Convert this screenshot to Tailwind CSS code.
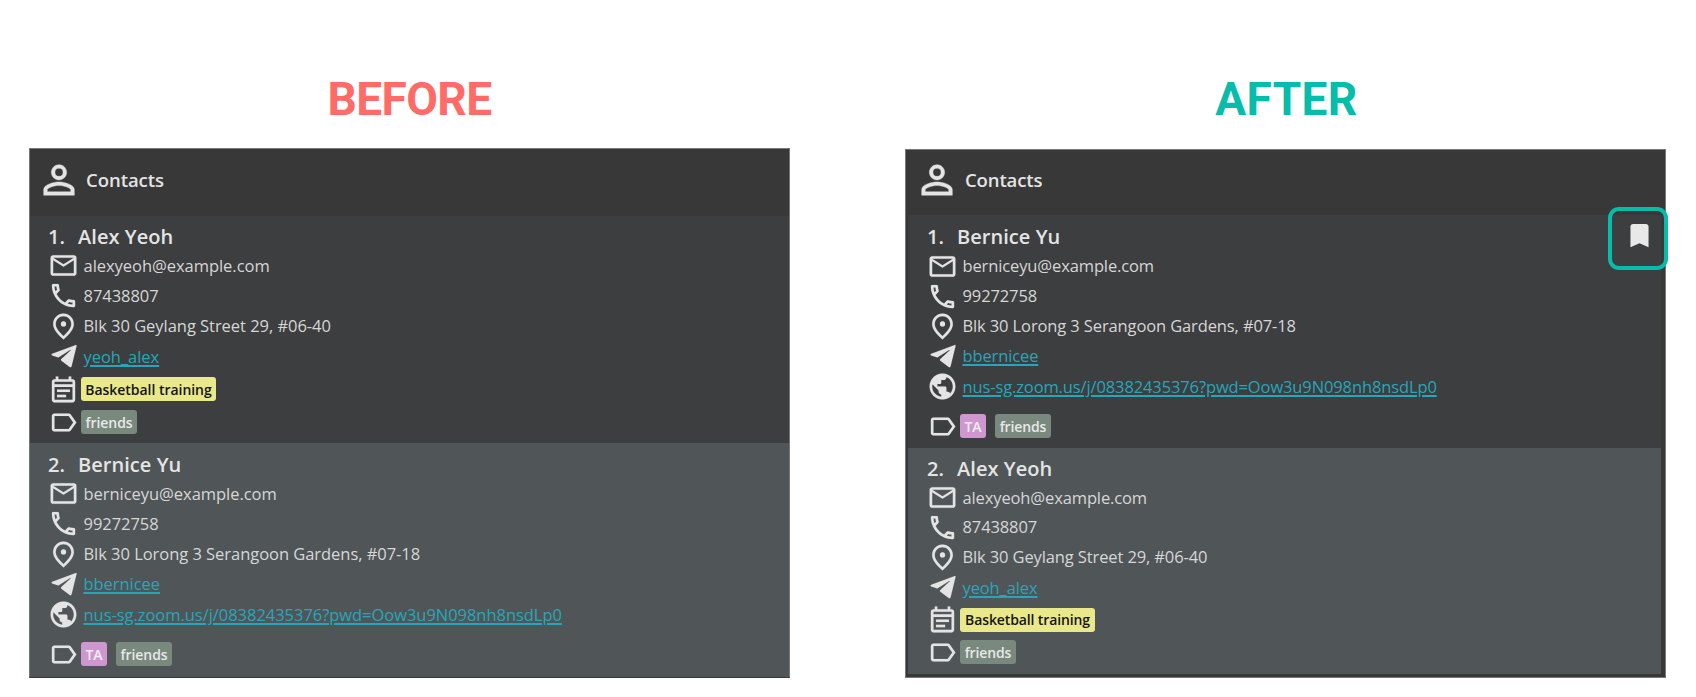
<!DOCTYPE html>
<html lang="en">
<head>
<meta charset="utf-8">
<title>Contacts</title>
<script src="https://cdn.jsdelivr.net/npm/@tailwindcss/browser@4"></script>
</head>
<body class="bg-white">
<svg class="hidden">
  <symbol id="person" viewBox="0 0 24 24"><path d="M12 5.900a2.100 2.100 0 1 1 0 4.200 2.100 2.100 0 0 1 0-4.200m0 9c2.970 0 6.100 1.460 6.100 2.100v1.100H5.900V17c0-.64 3.130-2.100 6.100-2.100M12 4C9.790 4 8 5.790 8 8s1.790 4 4 4 4-1.790 4-4-1.790-4-4-4zm0 9c-2.670 0-8 1.340-8 4v3h16v-3c0-2.660-5.330-4-8-4z"/></symbol>
  <symbol id="mail" viewBox="0 0 24 24"><path d="M22 6c0-1.100-.9-2-2-2H4c-1.100 0-2 .9-2 2v12c0 1.100.9 2 2 2h16c1.100 0 2-.9 2-2V6zm-2 0l-8 5-8-5h16zm0 12H4V8l8 5 8-5v10z"/></symbol>
  <symbol id="phone" viewBox="0 0 24 24"><path d="M6.540 5c.06.89.21 1.760.45 2.590l-1.200 1.200c-.41-1.200-.67-2.470-.76-3.790h1.510m9.860 12.020c.85.24 1.720.39 2.600.45v1.490c-1.320-.09-2.590-.35-3.800-.75l1.200-1.190M7.500 3H4c-.55 0-1 .45-1 1 0 9.390 7.610 17 17 17 .55 0 1-.45 1-1v-3.490c0-.55-.45-1-1-1-1.240 0-2.450-.2-3.570-.57-.1-.04-.21-.05-.31-.05-.26 0-.51.1-.71.29l-2.200 2.200c-2.830-1.450-5.150-3.760-6.590-6.590l2.200-2.200c.28-.28.36-.67.25-1.020C8.700 6.450 8.500 5.250 8.500 4c0-.55-.45-1-1-1z"/></symbol>
  <symbol id="pin" viewBox="0 0 24 24"><path d="M12 4c3.350 0 6 2.570 6 6.200 0 2.340-1.950 5.440-6 9.140-4.050-3.700-6-6.790-6-9.140C6 6.570 8.650 4 12 4m0-2c-4.200 0-8 3.220-8 8.200 0 3.320 2.670 7.250 8 11.800 5.330-4.550 8-8.480 8-11.800C20 5.220 16.200 2 12 2z"/><circle cx="12" cy="10" r="2"/></symbol>
  <symbol id="plane" viewBox="0 0 24 24"><path d="M21.600 3.100 3.300 9.900c-.8.400-.8 1 0 1.300l4.700 1.500 9.100-5.700c.4-.2.700.1.400.4l-7.400 6.800v.8l6.700 5.100c.8.500 1.300.2 1.500-.7L22.100 3.800c.1-.6-.1-.9-.5-.7z"/></symbol>
  <symbol id="event" viewBox="0 0 24 24"><path d="M19 4h-1V2h-2v2H8V2H6v2H5c-1.110 0-1.990.9-1.990 2L3 20c0 1.100.89 2 2 2h14c1.100 0 2-.9 2-2V6c0-1.100-.9-2-2-2zm0 16H5V10h14v10zm0-12H5V6h14v2zM7 12h10v2H7zm0 4h7v2H7z"/></symbol>
  <symbol id="label" viewBox="0 0 24 24"><path d="M17.630 5.840C17.270 5.330 16.670 5 16 5L5 5.010C3.900 5.010 3 5.900 3 7v10c0 1.100.9 1.990 2 1.990L16 19c.67 0 1.270-.33 1.630-.84L22 12l-4.370-6.160zM16 17H5V7h11l3.550 5L16 17z"/></symbol>
  <symbol id="globe" viewBox="0 0 24 24"><path d="M12 2C6.480 2 2 6.480 2 12s4.480 10 10 10 10-4.480 10-10S17.520 2 12 2zm-1 17.930c-3.950-.49-7-3.850-7-7.930 0-.62.08-1.210.21-1.790L9 15v1c0 1.100.9 2 2 2v1.930zm6.900-2.540c-.26-.81-1-1.390-1.900-1.390h-1v-3c0-.55-.45-1-1-1H8v-2h2c.55 0 1-.45 1-1V7h2c1.100 0 2-.9 2-2v-.41c2.930 1.190 5 4.060 5 7.410 0 2.080-.8 3.970-2.100 5.390z"/></symbol>
  <symbol id="bookmark" viewBox="0 0 24 24"><path d="M17 3H7c-1.100 0-2 .9-2 2v16l7-3 7 3V5c0-1.100-.9-2-2-2z"/></symbol>
</svg>

<main class="flex h-[697px] w-[1696px] gap-[115px] overflow-hidden pl-[29px] font-['Open_Sans','Noto_Sans',sans-serif] whitespace-nowrap">
  <section class="w-[761px] shrink-0 tracking-[-0.04px]">
    <h1 class="flex h-[148px] items-end justify-center pb-[19px] font-[Roboto,sans-serif] text-[46px] leading-[60px] font-bold tracking-[-0.6px] text-[#ff6b66]">BEFORE</h1>
    <div class="h-[530px] w-[761px] border border-[#777] border-b-[#383838] bg-[#3d3e3f]">
      <header class="flex h-[67px] items-center bg-[#383838] pb-[4px] pl-[6px]">
        <svg class="mb-[1px] size-[46px] shrink-0 fill-[#e4e4e4] stroke-[#e4e4e4] stroke-[0.2px]"><use href="#person"/></svg>
        <span class="mb-[2px] ml-[4px] text-[18.500px] font-semibold text-[#e4e4e4]">Contacts</span>
      </header>
      <div id="l1" class="h-[227px] pt-[6px] pl-[18px]"></div>
      <div id="l2" class="h-[234px] bg-[#505658] pt-[7px] pl-[18px]"></div>
    </div>
  </section>
  <section class="w-[761px] shrink-0 tracking-[-0.12px]">
    <h1 class="flex h-[149px] items-end justify-center pb-[20px] pl-[2px] font-[Roboto,sans-serif] text-[46px] leading-[60px] font-bold tracking-[0.4px] text-[#06bcab]">AFTER</h1>
    <div class="relative h-[529px] w-[761px] border border-[#777] bg-[#383838]">
      <header class="flex h-[65px] items-center pb-[5px] pl-[8px]">
        <svg class="mb-[1px] size-[46px] shrink-0 fill-[#e4e4e4] stroke-[#e4e4e4] stroke-[0.2px]"><use href="#person"/></svg>
        <span class="mb-[1px] ml-[5px] text-[18.500px] font-semibold text-[#e4e4e4]">Contacts</span>
      </header>
      <div id="r1" class="ml-[2px] h-[233px] w-[753px] bg-[#3d3e3f] pt-[7px] pl-[19px]"></div>
      <div id="r2" class="ml-[2px] h-[226px] w-[753px] bg-[#505658] pt-[6px] pl-[19px]"></div>
      <div class="absolute top-[57px] left-[702px] flex h-[63px] w-[60px] items-center justify-center rounded-[11px] border-4 border-[#06bcab]">
        <svg class="mb-[6px] ml-[2px] size-[31px] fill-[#e8e8e8]"><use href="#bookmark"/></svg>
      </div>
    </div>
  </section>
</main>

<script>
const alex = { name: 'Alex Yeoh', mail: 'alexyeoh@example.com', phone: '87438807', addr: 'Blk 30 Geylang Street 29, #06-40', tg: 'yeoh_alex' };
const bernice = { name: 'Bernice Yu', mail: 'berniceyu@example.com', phone: '99272758', addr: 'Blk 30 Lorong 3 Serangoon Gardens, #07-18', tg: 'bbernicee' };
const row = (h, icon, body) => `<div class="flex items-center" style="height:${h}px"><svg class="size-[31px] shrink-0 fill-[#e4e4e4] stroke-[#e4e4e4] stroke-[0.1px]"><use href="#${icon}"/></svg>${body}</div>`;
const text = t => `<span class="ml-[4.500px] pt-[1px] text-[16.500px] text-[#d6d6d6]">${t}</span>`;
const link = t => `<a class="ml-[4.500px] pt-[1px] text-[16.500px] text-[#26a6bb] underline decoration-[1.500px] underline-offset-[2px]">${t}</a>`;
const chip = { yellow: 'bg-[#e9e88a] text-[#151515] w-[135px]', green: 'bg-[#79897e] text-[#e8e8e8] w-[56px]', pink: 'bg-[#ce97cf] text-[#eee] w-[26px] mr-[7px]' };
const tag = (t, c) => `<span class="ml-[2px] flex h-[24px] items-center justify-center rounded-[3px] text-[14px] font-semibold ${chip[c]}">${t}</span>`;
function card(id, n, p, h, lower) {
  document.getElementById(id).innerHTML =
    `<div class="flex items-center pt-[1px] text-[20px] font-semibold tracking-[0.05px] text-[#e4e4e4]" style="height:${h[0]}px"><span class="w-[30px]">${n}.</span><span>${p.name}</span></div>` +
    row(h[1], 'mail', text(p.mail)) + row(h[2], 'phone', text(p.phone)) +
    row(h[3], 'pin', text(p.addr)) + row(h[4], 'plane', link(p.tg)) + lower;
}
const event = h => row(h, 'event', tag('Basketball training', 'yellow'));
const friends = h => row(h, 'label', tag('friends', 'green'));
const web = h => row(h, 'globe', link('nus-sg.zoom.us/j/08382435376?pwd=Oow3u9N098nh8nsdLp0'));
const both = h => '<div class="h-[8px]"></div>' + row(h, 'label', tag('TA', 'pink') + tag('friends', 'green'));
card('l1', 1, alex, [29, 29, 31, 30, 31], event(34) + friends(32));
card('l2', 2, bernice, [29, 29, 31, 30, 30], web(31) + both(32));
card('r1', 1, bernice, [29, 30, 30, 30, 30], web(31) + both(32));
card('r2', 2, alex, [29, 29, 30, 30, 31], event(33) + friends(32));
</script>
</body>
</html>
